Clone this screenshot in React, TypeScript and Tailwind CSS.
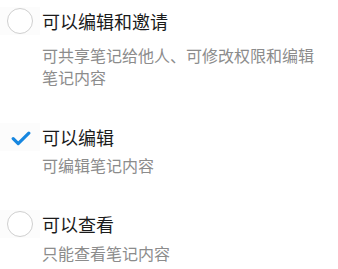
const FONT = { fontFamily: '"Noto Sans CJK SC", "Noto Sans", sans-serif' };

function Circle() {
  return <div className="w-[26px] h-[26px] rounded-full border-[1.5px] border-[#cfcfcf] bg-white" />;
}

function Check() {
  return (
    <svg width="20" height="15" viewBox="0 0 20 15" fill="none" className="ml-[2px] mt-[3px]">
      <path d="M2.2 7.6 L7.2 12.6 L17.8 2.2" stroke="#1787e0" strokeWidth="3.2" strokeLinecap="round" strokeLinejoin="round" />
    </svg>
  );
}

type Opt = {
  title: string;
  desc: string;
  checked: boolean;
  top: string;
  gap: string;
};

const options: Opt[] = [
  { title: "可以编辑和邀请", desc: "可共享笔记给他人、可修改权限和编辑笔记内容", checked: false, top: "mt-[7px]", gap: "mt-[9px]" },
  { title: "可以编辑", desc: "可编辑笔记内容", checked: true, top: "mt-[35px]", gap: "mt-[3px]" },
  { title: "可以查看", desc: "只能查看笔记内容", checked: false, top: "mt-[34px]", gap: "mt-[4px]" },
];

export default function App() {
  return (
    <div className="w-[338px] h-[269px] bg-white overflow-hidden" style={FONT}>
      {options.map((o) => (
        <div key={o.title} className={`flex ${o.top}`}>
          <div className="w-[42px] shrink-0 flex justify-start">
            <div className="w-[40px] h-[28px] flex items-center justify-center bg-[#fcfcfc]">
              {o.checked ? <Check /> : <Circle />}
            </div>
          </div>
          <div className="w-[280px]">
            <div className="text-[18px] leading-[28px] text-[#1b1b1b]">{o.title}</div>
            <div className={`${o.gap} text-[16px] leading-[22px] text-[#8c8c8c]`}>{o.desc}</div>
          </div>
        </div>
      ))}
    </div>
  );
}
